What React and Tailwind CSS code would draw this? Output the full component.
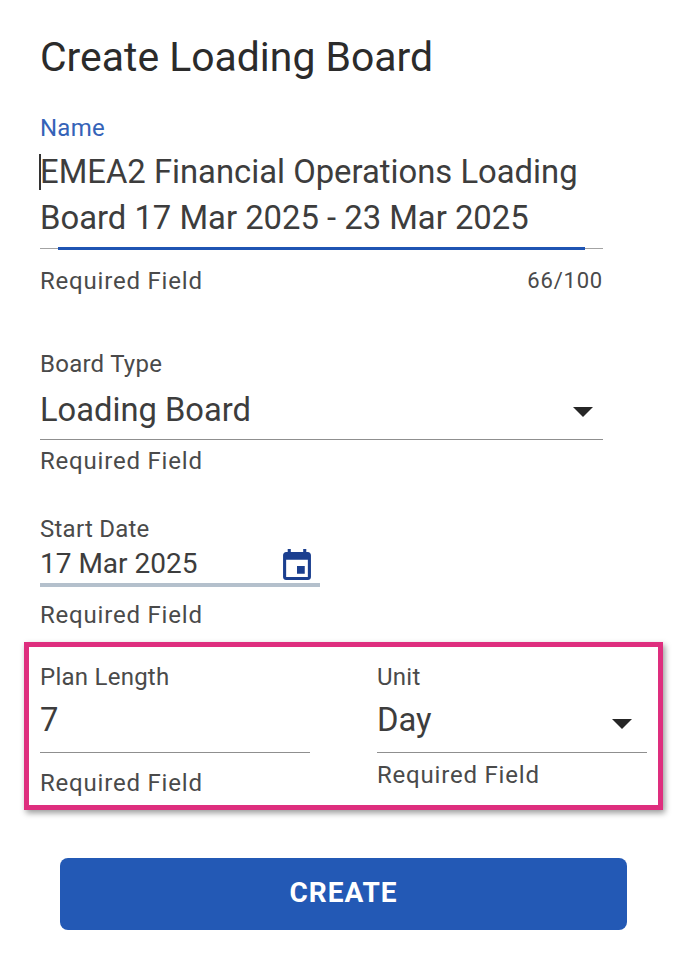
import React from 'react';

const Helper = ({ children, className = '' }) => (
  <div className={`text-[24px] leading-[26px] tracking-[0.8px] text-[#4a4a4a] ${className}`}>{children}</div>
);

const Label = ({ children, className = '' }) => (
  <div className={`text-[24px] leading-[26px] tracking-[0.25px] ${className}`}>{children}</div>
);

const Caret = ({ className = '' }) => (
  <svg width="20" height="10" viewBox="0 0 20 10" className={`shrink-0 ${className}`}>
    <path d="M0 0h20L10 10z" fill="#262626" />
  </svg>
);

const CalendarIcon = () => (
  <svg width="28" height="31" viewBox="3 1 18 20" className="shrink-0" fill="#1b3f8f">
    <path d="M17 12h-5v5h5v-5zM16 1v2H8V1H6v2H5c-1.11 0-1.99.9-1.99 2L3 19c0 1.1.89 2 2 2h14c1.1 0 2-.9 2-2V5c0-1.1-.9-2-2-2h-1V1h-2zm3 18H5V8h14v11z" />
  </svg>
);

export default function App() {
  return (
    <div className="w-[689px] h-[958px] bg-white font-['Roboto',sans-serif] overflow-hidden">
      <div className="pl-10 pt-9">
        <h1 className="text-[40.9px] leading-[42px] text-[#2b2b2b] font-normal">Create Loading Board</h1>

        <div className="w-[563px] mt-[37px]">
          <Label className="text-[#3563b8]">Name</Label>
          <div className="relative mt-[8px] text-[32.8px] leading-[46px] text-[#3d3d3d]">
            <span className="absolute -left-px top-[5px] w-[2px] h-[36px] bg-[#333333]" />
            <div>EMEA2 Financial Operations Loading</div>
            <div>Board 17 Mar 2025 - 23 Mar 2025</div>
          </div>
          <div className="relative mt-[7px] h-px bg-[#a3a3a3]">
            <span className="absolute left-[18px] w-[527px] -top-px h-[3px] bg-[#1f54b3]" />
          </div>
          <div className="flex justify-between items-center mt-[19px]">
            <Helper>Required Field</Helper>
            <div className="text-[22px] leading-[26px] tracking-[0.8px] text-[#4a4a4a]">66/100</div>
          </div>
        </div>

        <div className="w-[563px] mt-[57px]">
          <Label className="text-[#4a4a4a]">Board Type</Label>
          <div className="flex items-center justify-between pr-[10px] mt-[10px] text-[32.7px] leading-[46px] text-[#3d3d3d]">
            <span>Loading Board</span>
            <Caret className="translate-y-[2px]" />
          </div>
          <div className="h-px bg-[#8f8f8f] mt-[6px]" />
          <Helper className="mt-[8px]">Required Field</Helper>
        </div>

        <div className="w-[280px] mt-[42px]">
          <Label className="text-[#4a4a4a]">Start Date</Label>
          <div className="flex items-center justify-between pr-[9px] mt-[5px] text-[28px] leading-[34px] text-[#3d3d3d]">
            <span>17 Mar 2025</span>
            <CalendarIcon />
          </div>
          <div className="h-[4px] bg-[#b4c0cc] mt-[2px]" />
          <Helper className="mt-[15px]">Required Field</Helper>
        </div>
      </div>

      <div className="ml-6 mt-[14px] w-[639px] h-[168px] border-[5px] border-[#de2e7e] shadow-[2px_3px_6px_rgba(0,0,0,0.4)] pl-[11px] pt-[17px] flex">
        <div className="w-[270px]">
          <Label className="text-[#4a4a4a]">Plan Length</Label>
          <div className="mt-[7px] text-[32.8px] leading-[46px] text-[#3d3d3d]">7</div>
          <div className="h-px bg-[#8f8f8f] mt-[9px]" />
          <Helper className="mt-[17px]">Required Field</Helper>
        </div>
        <div className="w-[270px] ml-[67px]">
          <Label className="text-[#4a4a4a]">Unit</Label>
          <div className="flex items-center justify-between pr-[15px] mt-[7px] text-[32.8px] leading-[46px] text-[#3d3d3d]">
            <span>Day</span>
            <Caret className="translate-y-[4px]" />
          </div>
          <div className="h-px bg-[#8f8f8f] mt-[9px]" />
          <Helper className="mt-[9px]">Required Field</Helper>
        </div>
      </div>

      <button className="block ml-[60px] mt-[48px] w-[567px] h-[72px] pb-[2px] rounded-[8px] bg-[#2359b5] text-white text-[28px] font-bold tracking-[1px]">
        CREATE
      </button>
    </div>
  );
}
